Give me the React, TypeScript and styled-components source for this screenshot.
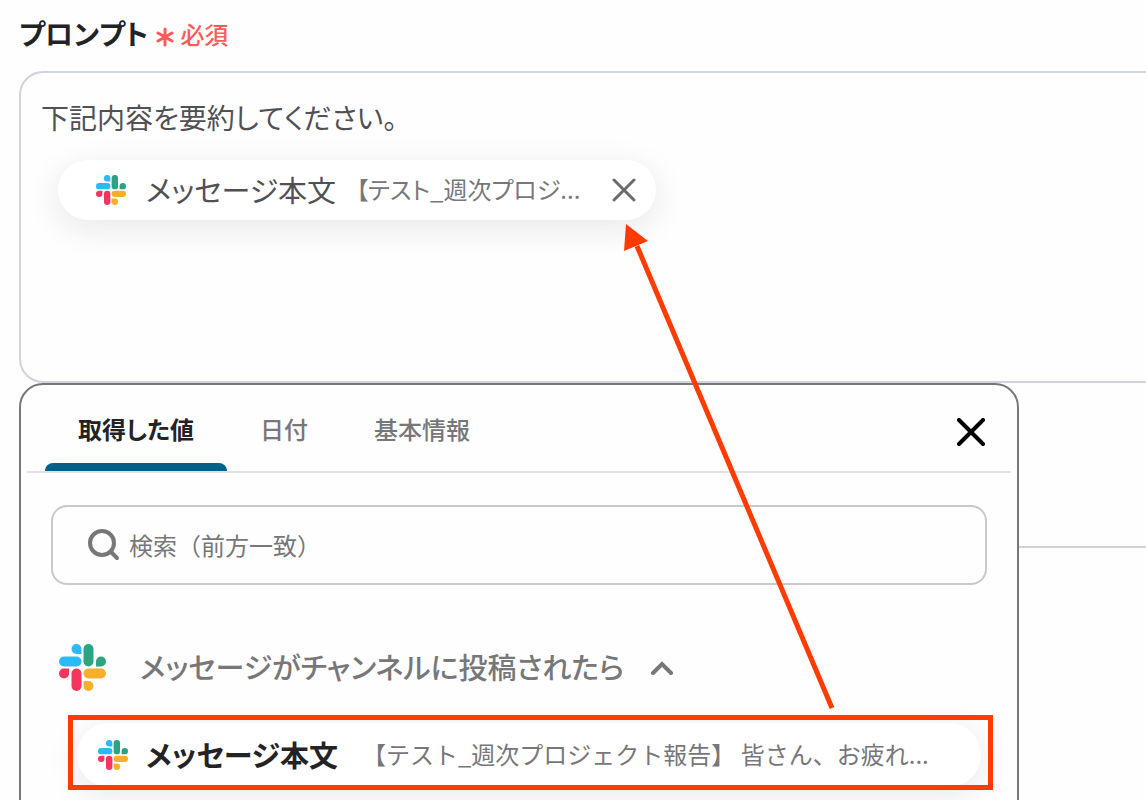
import React from 'react';
import styled, { createGlobalStyle } from 'styled-components';

const GlobalStyle = createGlobalStyle`
  *, *::before, *::after { box-sizing: border-box; }
  body {
    margin: 0;
    background: #fefefe;
    color: #232326;
    font-family: "Noto Sans CJK JP", sans-serif;
  }
  button, input, textarea { font: inherit; color: inherit; }
`;

const Page = styled.main`
  position: relative;
  height: 100vh;
  min-height: 800px;
  overflow: hidden;
  padding: 14px 0 0 19px;
`;

const FieldHeader = styled.div`
  display: flex;
  align-items: center;
  gap: 8px;
  height: 40px;
  margin-bottom: 17px;
`;

const FieldLabel = styled.label`
  padding-bottom: 2px;
  font-size: 28px;
  line-height: 40px;
  font-weight: 700;
  font-kerning: none;
  font-feature-settings: "palt";
`;

const Required = styled.span`
  display: flex;
  align-items: center;
  gap: 6px;
  color: #ff5a5a;
  font-size: 24px;
  line-height: 40px;
  font-weight: 500;

  svg { margin-top: 6px; }
`;

const Editor = styled.div`
  height: 312px;
  padding: 24px 20px;
  border: 2px solid #cfd3df;
  border-right: 0;
  border-radius: 24px 0 0 24px;
`;

const PromptText = styled.textarea`
  display: block;
  width: 100%;
  height: 40px;
  margin-bottom: 23px;
  padding: 0;
  border: 0;
  outline: 0;
  resize: none;
  overflow: hidden;
  background: transparent;
  color: #505055;
  font-size: 28px;
  line-height: 40px;
  font-kerning: none;
  font-feature-settings: "palt";
`;

const Pill = styled.div`
  display: flex;
  align-items: center;
  background: #fff;
  border-radius: 32px;
  box-shadow: 0 8px 32px rgba(50, 20, 60, 0.1);
`;

const Chip = styled(Pill)`
  width: 598px;
  height: 60px;
  margin-left: 17px;
  padding: 0 20px 0 38px;
`;

const ValueName = styled.span<{ $strong?: boolean }>`
  margin-left: ${(p) => (p.$strong ? 18 : 20)}px;
  padding-bottom: 2px;
  white-space: nowrap;
  font-size: 29px;
  line-height: 40px;
  font-weight: ${(p) => (p.$strong ? 700 : 400)};
  color: ${(p) => (p.$strong ? '#232326' : '#505055')};
  font-feature-settings: "palt";
`;

const Preview = styled.span<{ $compact?: boolean }>`
  flex: 1;
  margin-left: ${(p) => (p.$compact ? 20 : 24)}px;
  padding-bottom: 2px;
  white-space: nowrap;
  color: #77777a;
  font-size: 24px;
  line-height: 40px;
  font-kerning: none;
  font-feature-settings: ${(p) => (p.$compact ? '"palt"' : 'normal')};
`;

const IconButton = styled.button`
  display: flex;
  padding: 0;
  border: 0;
  background: none;
  cursor: pointer;
`;

const NextField = styled.div`
  height: 165px;
  border-bottom: 2px solid #cfd3df;
`;

const Panel = styled.section`
  position: absolute;
  top: 383px;
  left: 19px;
  width: 1000px;
  height: 640px;
  padding: 0 6px;
  background: #fefefe;
  border: 2px solid #77777b;
  border-radius: 24px;
`;

const TabBar = styled.div`
  display: flex;
  height: 88px;
  padding: 0 26px 0 18px;
  border-bottom: 2px solid #e2e2e5;
`;

const Tab = styled.button<{ $active?: boolean }>`
  position: relative;
  padding: 2px 33px 0;
  border: 0;
  background: none;
  color: ${(p) => (p.$active ? '#232326' : '#77777a')};
  font-size: 24px;
  line-height: 36px;
  font-weight: ${(p) => (p.$active ? 700 : 500)};
  font-kerning: none;
  font-feature-settings: "palt";
  cursor: pointer;

  &::after {
    content: "";
    display: ${(p) => (p.$active ? 'block' : 'none')};
    position: absolute;
    left: 0;
    right: 0;
    bottom: 0;
    height: 8px;
    border-radius: 8px 8px 0 0;
    background: #00628a;
  }
`;

const PanelClose = styled(IconButton)`
  margin-left: auto;
  padding-top: 8px;
  align-items: center;
`;

const SearchBox = styled.label`
  display: flex;
  align-items: center;
  gap: 9px;
  height: 80px;
  margin: 32px 24px 0;
  padding: 0 33px;
  border: 2px solid #c9c9cc;
  border-radius: 16px;
`;

const SearchInput = styled.input`
  flex: 1;
  min-width: 0;
  padding: 0;
  border: 0;
  outline: 0;
  background: none;
  font-size: 24px;
  line-height: 36px;

  &::placeholder { color: #77777a; opacity: 1; }
`;

const GroupHeader = styled.button`
  display: flex;
  align-items: center;
  width: 100%;
  height: 48px;
  margin-top: 58px;
  padding: 0 32px;
  border: 0;
  background: none;
  color: #77777a;
  font-size: 29px;
  line-height: 40px;
  font-weight: 500;
  font-feature-settings: "palt";
  cursor: pointer;
`;

const GroupTitle = styled.span`
  margin: 0 26px 0 34px;
  padding-bottom: 2px;
`;

const ValueItem = styled(Pill).attrs({ as: 'button', type: 'button' })`
  width: 904px;
  height: 64px;
  margin: 32px 0 0 50px;
  padding: 0 21px;
  border: 0;
  text-align: left;
  cursor: pointer;
`;

const Highlight = styled.div`
  position: absolute;
  top: 715px;
  left: 68px;
  width: 925px;
  height: 75px;
  border: 5px solid #ff3b00;
  pointer-events: none;
`;

const Arrow = styled.svg`
  position: absolute;
  top: 220px;
  left: 620px;
  pointer-events: none;
`;

const SlackLogo = ({ size }: { size: number }) => (
  <svg width={size} height={size} viewBox="0 0 47 47" aria-hidden="true">
    <g fill="#2cb9f7">
      <path d="M17.5 0a5 5 0 0 1 5 5v5h-5a5 5 0 0 1 0-10z" />
      <rect x="0" y="12.5" width="22.5" height="10" rx="5" />
    </g>
    <g fill="#2aa583">
      <rect x="24.5" y="0" width="10" height="22.5" rx="5" />
      <path d="M37 22.5v-5a5 5 0 1 1 5 5z" />
    </g>
    <g fill="#f5345f">
      <path d="M10 24.5v5a5 5 0 1 1-5-5z" />
      <rect x="12.5" y="24.5" width="10" height="22.5" rx="5" />
    </g>
    <g fill="#f4b02c">
      <rect x="24.5" y="24.5" width="22.5" height="10" rx="5" />
      <path d="M24.5 37h5a5 5 0 1 1-5 5z" />
    </g>
  </svg>
);

const Cross = ({ size, stroke, color }: { size: number; stroke: number; color: string }) => (
  <svg width={size} height={size} viewBox={`0 0 ${size} ${size}`} aria-hidden="true">
    <path
      d={`M2 2L${size - 2} ${size - 2}M${size - 2} 2L2 ${size - 2}`}
      stroke={color}
      strokeWidth={stroke}
      strokeLinecap="round"
    />
  </svg>
);

export default function App() {
  return (
    <>
      <GlobalStyle />
      <Page>
        <FieldHeader>
          <FieldLabel htmlFor="prompt">プロンプト</FieldLabel>
          <Required>
            <svg width="18" height="20" viewBox="0 0 18 20" aria-hidden="true">
              <path d="M9 2v16M2 6l14 8M16 6L2 14" stroke="#ff5a5a" strokeWidth="3" strokeLinecap="round" />
            </svg>
            必須
          </Required>
        </FieldHeader>
        <Editor>
          <PromptText id="prompt" rows={1} defaultValue="下記内容を要約してください。" />
          <Chip>
            <SlackLogo size={30} />
            <ValueName>メッセージ本文</ValueName>
            <Preview $compact>【テスト_週次プロジ...</Preview>
            <IconButton type="button" aria-label="値を削除">
              <Cross size={24} stroke={3} color="#6b6b6f" />
            </IconButton>
          </Chip>
        </Editor>
        <NextField />

        <Panel>
          <TabBar role="tablist">
            <Tab type="button" role="tab" aria-selected="true" $active>取得した値</Tab>
            <Tab type="button" role="tab" aria-selected="false">日付</Tab>
            <Tab type="button" role="tab" aria-selected="false">基本情報</Tab>
            <PanelClose type="button" aria-label="閉じる">
              <Cross size={28} stroke={4} color="#000" />
            </PanelClose>
          </TabBar>
          <SearchBox>
            <svg width="34" height="34" viewBox="0 0 34 34" fill="none" stroke="#77777a" strokeWidth="4" strokeLinecap="round" aria-hidden="true">
              <circle cx="16" cy="15" r="12" />
              <path d="M25 24l6 6" />
            </svg>
            <SearchInput type="search" placeholder="検索（前方一致）" aria-label="検索" />
          </SearchBox>
          <GroupHeader type="button" aria-expanded="true">
            <SlackLogo size={47} />
            <GroupTitle>メッセージがチャンネルに投稿されたら</GroupTitle>
            <svg width="24" height="16" viewBox="0 0 24 16" fill="none" stroke="#77777a" strokeWidth="4" aria-hidden="true">
              <path d="M3 14l9-9 9 9" strokeLinecap="round" />
            </svg>
          </GroupHeader>
          <ValueItem>
            <SlackLogo size={30} />
            <ValueName $strong>メッセージ本文</ValueName>
            <Preview>【テスト_週次プロジェクト報告】 皆さん、お疲れ...</Preview>
          </ValueItem>
        </Panel>

        <Highlight />
        <Arrow width="220" height="492" viewBox="0 0 220 492" aria-hidden="true">
          <path d="M17 26L212 488" stroke="#ff3b00" strokeWidth="5" />
          <path d="M6 4L28 21L4 31z" fill="#ff3b00" />
        </Arrow>
      </Page>
    </>
  );
}
